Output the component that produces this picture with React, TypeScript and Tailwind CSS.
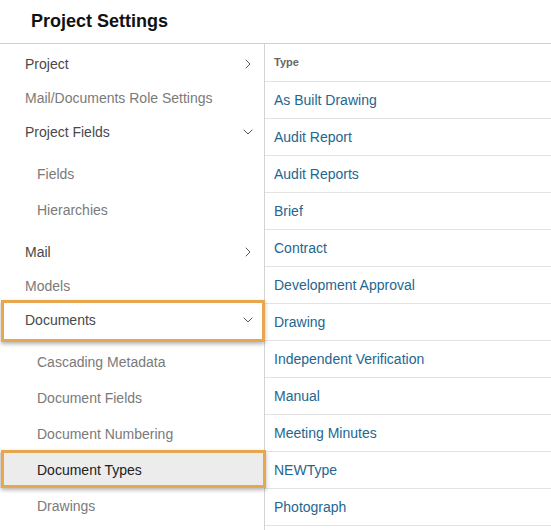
import React from 'react';
import { ChevronRight, ChevronDown } from 'lucide-react';

type NavItem = {
  label: string;
  tone: 'dark' | 'light';
  icon?: 'right' | 'down';
  highlight?: boolean;
  children?: { label: string; selected?: boolean }[];
};

const navItems: NavItem[] = [
  { label: 'Project', tone: 'dark', icon: 'right' },
  { label: 'Mail/Documents Role Settings', tone: 'light' },
  {
    label: 'Project Fields',
    tone: 'dark',
    icon: 'down',
    children: [{ label: 'Fields' }, { label: 'Hierarchies' }],
  },
  { label: 'Mail', tone: 'dark', icon: 'right' },
  { label: 'Models', tone: 'light' },
  {
    label: 'Documents',
    tone: 'dark',
    icon: 'down',
    highlight: true,
    children: [
      { label: 'Cascading Metadata' },
      { label: 'Document Fields' },
      { label: 'Document Numbering' },
      { label: 'Document Types', selected: true },
      { label: 'Drawings' },
    ],
  },
];

const types = [
  'As Built Drawing',
  'Audit Report',
  'Audit Reports',
  'Brief',
  'Contract',
  'Development Approval',
  'Drawing',
  'Independent Verification',
  'Manual',
  'Meeting Minutes',
  'NEWType',
  'Photograph',
];

const App = () => {
  return (
    <div className="w-[551px] h-[530px] overflow-hidden bg-white font-['Liberation_Sans',Arial,sans-serif]">
      <div className="h-[44px] flex items-center pl-[31px] border-b border-[#cfcfcf]">
        <h1 className="text-[18px] font-bold text-[#111]">Project Settings</h1>
      </div>

      <div className="flex">
        <div className="w-[265px] shrink-0 border-r border-[#d4d4d4] pt-[3px]">
          {navItems.map((item) => (
            <div key={item.label}>
              <div className="relative h-[34px] flex items-center justify-between pl-[25px] pr-[8px]">
                <span className={`text-[14px] ${item.tone === 'dark' ? 'text-[#484848]' : 'text-[#7a7a7a]'}`}>
                  {item.label}
                </span>
                {item.icon === 'right' && <ChevronRight size={16} strokeWidth={1.5} className="text-[#555]" />}
                {item.icon === 'down' && <ChevronDown size={16} strokeWidth={1.5} className="text-[#555]" />}
                {item.highlight && (
                  <div className="absolute left-[1px] right-[-1px] top-[-3px] bottom-[-5px] border-[3px] border-[#e8a64f] shadow-[0_2px_4px_rgba(0,0,0,0.3)] pointer-events-none" />
                )}
              </div>
              {item.children && (
                <div className="py-[7px]">
                  {item.children.map((child) => (
                    <div
                      key={child.label}
                      className={`relative h-[36px] flex items-center pl-[37px] ${child.selected ? 'bg-[#ececec]' : ''}`}
                    >
                      <span className={`text-[14px] ${child.selected ? 'text-[#222]' : 'text-[#7a7a7a]'}`}>
                        {child.label}
                      </span>
                      {child.selected && (
                        <div className="absolute left-[1px] right-[-2px] top-[-2px] bottom-0 border-[3px] border-[#e8a64f] shadow-[0_2px_4px_rgba(0,0,0,0.3)] pointer-events-none" />
                      )}
                    </div>
                  ))}
                </div>
              )}
            </div>
          ))}
        </div>

        <div className="flex-1">
          <div className="h-[38px] flex items-center pl-[9px] border-b border-[#e3e3e3]">
            <span className="text-[11px] font-bold text-[#666]">Type</span>
          </div>
          {types.map((t) => (
            <div key={t} className="h-[37px] flex items-center pl-[9px] border-b border-[#e3e3e3]">
              <span className="text-[14px] text-[#24668f]">{t}</span>
            </div>
          ))}
        </div>
      </div>
    </div>
  );
};

export default App;
